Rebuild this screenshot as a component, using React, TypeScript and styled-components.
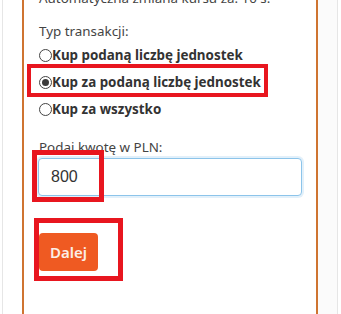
import React, { useState } from 'react'
import styled, { createGlobalStyle } from 'styled-components'

const GlobalStyle = createGlobalStyle`
	html, body {
		margin: 0;
		padding: 0;
		background: #fff;
		overflow: hidden;
	}
	body {
		font-family: 'Noto Sans', 'Open Sans', sans-serif;
		color: #333;
	}
`

const Page = styled.div`
	position: relative;
	width: 341px;
	height: 314px;
	display: flex;
	overflow: hidden;
`

const Gutter = styled.div<{ $side: 'left' | 'right' }>`
	flex: none;
	width: 19px;
	margin-left: ${(p) => (p.$side === 'left' ? '2px' : '0')};
	border-${(p) => (p.$side === 'left' ? 'left' : 'right')}: 1px solid #e6e6e6;
	background: ${(p) => (p.$side === 'left' ? '#fff' : '#fbfbfb')};
`

const Panel = styled.div`
	flex: none;
	box-sizing: border-box;
	width: 296px;
	border-left: 2px solid #cf7431;
	border-right: 2px solid #cf7431;
	padding: 0 15px;
	margin-top: -12px;
	font-size: 13.4px;
	line-height: 20px;
`

const Note = styled.p`
	margin: 0 0 13px;
	color: #444;
`

const Legend = styled.div`
	color: #444;
`

const RadioRow = styled.label`
	display: flex;
	align-items: center;
	height: 27px;
	font-weight: 700;
	color: #333;
	cursor: pointer;
`

const Radio = styled.span<{ $on: boolean }>`
	flex: none;
	box-sizing: border-box;
	width: 13px;
	height: 13px;
	margin-top: 1px;
	border-radius: 50%;
	border: 1px solid #444;
	background: #fff;
	display: grid;
	place-items: center;
	&::after {
		content: '';
		width: 7px;
		height: 7px;
		border-radius: 50%;
		background: ${(p) => (p.$on ? '#3a3a3a' : 'transparent')};
	}
`

const FieldLabel = styled.div`
	margin-top: 15px;
	color: #444;
`

const Input = styled.input`
	display: block;
	box-sizing: border-box;
	width: 264px;
	height: 38px;
	margin: 1px 0 0 -1px;
	padding: 0 12px;
	border: 1px solid #8cc4ea;
	border-radius: 4px;
	box-shadow: 0 0 0 2px rgba(140, 196, 234, 0.25);
	font-family: 'Liberation Sans', Arial, sans-serif;
	font-size: 16px;
	color: #333;
	outline: none;
`

const Button = styled.button`
	display: block;
	margin-top: 37px;
	height: 38px;
	padding: 0 11px;
	border: none;
	border-radius: 4px;
	background: #ef5a22;
	color: #fbeee6;
	font-family: 'Noto Sans', sans-serif;
	font-size: 15px;
	font-weight: 600;
`

const Mark = styled.div<{ $x: number; $y: number; $w: number; $h: number; $t: number }>`
	position: absolute;
	left: ${(p) => p.$x}px;
	top: ${(p) => p.$y}px;
	width: ${(p) => p.$w}px;
	height: ${(p) => p.$h}px;
	box-sizing: border-box;
	border: ${(p) => p.$t}px solid #e8161f;
	pointer-events: none;
`

const options = [
	'Kup podaną liczbę jednostek',
	'Kup za podaną liczbę jednostek',
	'Kup za wszystko',
]

export default function App() {
	const [picked, setPicked] = useState(1)
	const [amount, setAmount] = useState('800')

	return (
		<Page>
			<GlobalStyle />
			<Gutter $side="left" />
			<Panel>
				<Note>Automatyczna zmiana kursu za: 10 s.</Note>
				<Legend>Typ transakcji:</Legend>
				{options.map((o, i) => (
					<RadioRow key={o} onClick={() => setPicked(i)}>
						<Radio $on={picked === i} />
						{o}
					</RadioRow>
				))}
				<FieldLabel>Podaj kwotę w PLN:</FieldLabel>
				<Input value={amount} onChange={(e) => setAmount(e.target.value)} />
				<Button>Dalej</Button>
			</Panel>
			<Gutter $side="right" />

			<Mark $x={27} $y={64} $w={241} $h={33} $t={4} />
			<Mark $x={32} $y={150} $w={72} $h={52} $t={5} />
			<Mark $x={34} $y={218} $w={89} $h={63} $t={5} />
		</Page>
	)
}
